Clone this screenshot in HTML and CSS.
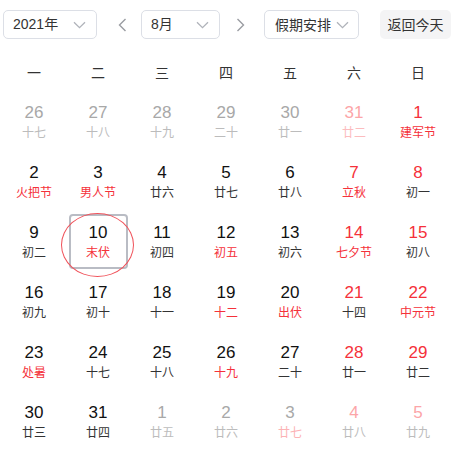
FILE: index.html
```html
<!DOCTYPE html>
<html lang="zh">
<head>
<meta charset="utf-8">
<link rel="stylesheet" href="styles.css">
</head>
<body>
<div class="cal">
  <div class="toolbar">
    <div class="select sel-year"><span>2021年</span><svg class="chev" width="13" height="8" viewBox="0 0 13 8"><path d="M1 1.2 L6.5 6.6 L12 1.2" fill="none" stroke="#b0b3ba" stroke-width="1.3"/></svg></div>
    <div class="arrow prev"><svg width="9" height="14" viewBox="0 0 9 14"><path d="M7.5 1 L1.5 7 L7.5 13" fill="none" stroke="#9a9ca2" stroke-width="1.4"/></svg></div>
    <div class="select sel-month"><span>8月</span><svg class="chev" width="13" height="8" viewBox="0 0 13 8"><path d="M1 1.2 L6.5 6.6 L12 1.2" fill="none" stroke="#b0b3ba" stroke-width="1.3"/></svg></div>
    <div class="arrow next"><svg width="9" height="14" viewBox="0 0 9 14"><path d="M1.5 1 L7.5 7 L1.5 13" fill="none" stroke="#9a9ca2" stroke-width="1.4"/></svg></div>
    <div class="select sel-hol"><span>假期安排</span><svg class="chev" width="13" height="8" viewBox="0 0 13 8"><path d="M1 1.2 L6.5 6.6 L12 1.2" fill="none" stroke="#b0b3ba" stroke-width="1.3"/></svg></div>
    <div class="today">返回今天</div>
  </div>
  <div class="weekdays">
    <div>一</div><div>二</div><div>三</div><div>四</div><div>五</div><div>六</div><div>日</div>
  </div>
  <div class="days">
    <div class="day other"><span class="num">26</span><span class="lun">十七</span></div>
    <div class="day other"><span class="num">27</span><span class="lun">十八</span></div>
    <div class="day other"><span class="num">28</span><span class="lun">十九</span></div>
    <div class="day other"><span class="num">29</span><span class="lun">二十</span></div>
    <div class="day other"><span class="num">30</span><span class="lun">廿一</span></div>
    <div class="day other we"><span class="num">31</span><span class="lun">廿二</span></div>
    <div class="day we"><span class="num">1</span><span class="lun fest">建军节</span></div>

    <div class="day"><span class="num">2</span><span class="lun fest">火把节</span></div>
    <div class="day"><span class="num">3</span><span class="lun fest">男人节</span></div>
    <div class="day"><span class="num">4</span><span class="lun">廿六</span></div>
    <div class="day"><span class="num">5</span><span class="lun">廿七</span></div>
    <div class="day"><span class="num">6</span><span class="lun">廿八</span></div>
    <div class="day we"><span class="num">7</span><span class="lun fest">立秋</span></div>
    <div class="day we"><span class="num">8</span><span class="lun">初一</span></div>

    <div class="day"><span class="num">9</span><span class="lun">初二</span></div>
    <div class="day selected"><div class="box"><span class="num">10</span><span class="lun fest">末伏</span></div><div class="ring"></div></div>
    <div class="day"><span class="num">11</span><span class="lun">初四</span></div>
    <div class="day"><span class="num">12</span><span class="lun fest">初五</span></div>
    <div class="day"><span class="num">13</span><span class="lun">初六</span></div>
    <div class="day we"><span class="num">14</span><span class="lun fest">七夕节</span></div>
    <div class="day we"><span class="num">15</span><span class="lun">初八</span></div>

    <div class="day"><span class="num">16</span><span class="lun">初九</span></div>
    <div class="day"><span class="num">17</span><span class="lun">初十</span></div>
    <div class="day"><span class="num">18</span><span class="lun">十一</span></div>
    <div class="day"><span class="num">19</span><span class="lun fest">十二</span></div>
    <div class="day"><span class="num">20</span><span class="lun fest">出伏</span></div>
    <div class="day we"><span class="num">21</span><span class="lun">十四</span></div>
    <div class="day we"><span class="num">22</span><span class="lun fest">中元节</span></div>

    <div class="day"><span class="num">23</span><span class="lun fest">处暑</span></div>
    <div class="day"><span class="num">24</span><span class="lun">十七</span></div>
    <div class="day"><span class="num">25</span><span class="lun">十八</span></div>
    <div class="day"><span class="num">26</span><span class="lun fest">十九</span></div>
    <div class="day"><span class="num">27</span><span class="lun">二十</span></div>
    <div class="day we"><span class="num">28</span><span class="lun">廿一</span></div>
    <div class="day we"><span class="num">29</span><span class="lun">廿二</span></div>

    <div class="day"><span class="num">30</span><span class="lun">廿三</span></div>
    <div class="day"><span class="num">31</span><span class="lun">廿四</span></div>
    <div class="day other"><span class="num">1</span><span class="lun">廿五</span></div>
    <div class="day other"><span class="num">2</span><span class="lun">廿六</span></div>
    <div class="day other"><span class="num">3</span><span class="lun fest">廿七</span></div>
    <div class="day other we"><span class="num">4</span><span class="lun">廿八</span></div>
    <div class="day other we"><span class="num">5</span><span class="lun">廿九</span></div>
  </div>
</div>
</body>
</html>
```

FILE: styles.css
```css
html, body {
  margin: 0;
  padding: 0;
  background: #fff;
}
body {
  font-family: "Liberation Sans", "Noto Sans CJK SC", sans-serif;
  color: #303133;
}
.cal {
  width: 455px;
}
.toolbar {
  display: flex;
  align-items: center;
  padding: 10px 0 0 3px;
  height: 29px;
}
.select {
  box-sizing: border-box;
  height: 29px;
  border: 1px solid #dcdfe6;
  border-radius: 5px;
  display: flex;
  align-items: center;
  justify-content: space-between;
  padding: 0 10px 0 9px;
  font-size: 14px;
  color: #333;
  font-family: "Liberation Sans", "Noto Sans CJK SC", sans-serif;
}
.select span {
  line-height: 27px;
}
.chev {
  display: block;
}
.sel-year { width: 94px; }
.sel-month { width: 79px; padding-right: 10px; }
.sel-hol { width: 95px; padding-left: 10px; padding-right: 9px; }
.sel-hol span { font-family: "Noto Sans CJK SC", sans-serif; }
.arrow {
  display: flex;
  align-items: center;
  justify-content: center;
  width: 10px;
  height: 29px;
}
.arrow svg { display: block; }
.prev { margin: 0 14px 0 20px; }
.next { margin: 0 19px 0 15px; }
.today {
  margin-left: 21px;
  width: 71px;
  height: 29px;
  border-radius: 5px;
  background: #f4f4f5;
  font-size: 14px;
  line-height: 29px;
  text-align: center;
  color: #333;
  font-family: "Noto Sans CJK SC", sans-serif;
}
.weekdays {
  display: grid;
  grid-template-columns: repeat(7, 64px);
  margin: 13px 0 0 2px;
  height: 40px;
}
.weekdays div {
  text-align: center;
  line-height: 40px;
  font-size: 14px;
  color: #333;
  font-family: "Noto Sans CJK SC", sans-serif;
}
.days {
  display: grid;
  grid-template-columns: repeat(7, 64px);
  grid-auto-rows: 60px;
  margin-left: 2px;
}
.day {
  display: flex;
  flex-direction: column;
  align-items: center;
  justify-content: center;
  position: relative;
}
.num {
  font-size: 17px;
  line-height: 20px;
  color: #111;
  font-family: "Liberation Sans", sans-serif;
}
.lun {
  font-size: 12px;
  line-height: 18px;
  color: #333;
  font-family: "Noto Sans CJK SC", sans-serif;
}
.lun.fest { color: #f5313a; }
.day.we .num { color: #f5313a; }
.day.other .num { color: #a8a8a8; }
.day.other .lun { color: #bcbcbc; }
.day.other.we .num { color: #fca5a8; }
.day.other .lun.fest,
.day.other.we .lun.fest { color: #fcb3b5; }
.day.other.we:nth-child(6) .lun { color: #fcbcbe; }

.box {
  box-sizing: border-box;
  width: 59px;
  height: 55px;
  border: 2px solid #b9bcc4;
  border-radius: 4px;
  display: flex;
  flex-direction: column;
  align-items: center;
  justify-content: center;
  margin-top: -1px;
}
.ring {
  position: absolute;
  left: -5px;
  top: 1px;
  width: 73px;
  height: 64px;
  box-sizing: border-box;
  border: 1px solid #f0525a;
  border-radius: 50%;
}
```
